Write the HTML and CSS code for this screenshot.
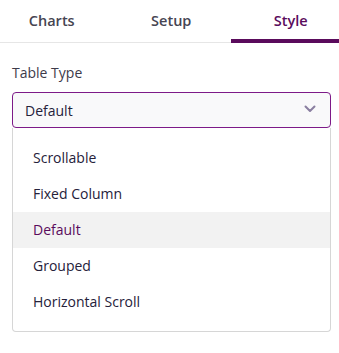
FILE: index.html
```html
<!DOCTYPE html>
<html>
<head>
<meta charset="utf-8">
<link rel="stylesheet" href="styles.css">
</head>
<body>
<div class="tabs">
  <div class="tab">Charts</div>
  <div class="tab">Setup</div>
  <div class="tab active">Style</div>
</div>
<div class="panel">
  <div class="label">Table Type</div>
  <div class="select">
    <span>Default</span>
    <svg class="chev" width="12" height="8" viewBox="0 0 12 8"><path d="M1.5 1.5 L6 6 L10.5 1.5" fill="none" stroke="#8a7fa0" stroke-width="2" stroke-linecap="round" stroke-linejoin="round"/></svg>
  </div>
  <ul class="menu">
    <li>Scrollable</li>
    <li>Fixed Column</li>
    <li class="selected">Default</li>
    <li>Grouped</li>
    <li>Horizontal Scroll</li>
  </ul>
</div>
</body>
</html>
```
FILE: styles.css
```css
html, body {
  margin: 0;
  padding: 0;
  background: #fff;
  overflow: hidden;
  font-family: "Open Sans", "Noto Sans", sans-serif;
}
.tabs {
  display: grid;
  grid-template-columns: repeat(3, 119.5px);
  margin-left: -8px;
  width: 358.5px;
  height: 43px;
  box-sizing: border-box;
  border-bottom: 1px solid #e6e6e6;
}
.tab {
  text-align: center;
  font-size: 14.5px;
  font-weight: 600;
  color: #464552;
  padding-top: 11px;
  line-height: 20px;
  box-sizing: border-box;
}
.tab.active {
  color: #5a0b5c;
  border-bottom: 4px solid #5a0b5c;
  border-top-left-radius: 4px;
  margin-bottom: -1px;
}
.panel {
  padding: 20px 8px 0 12px;
}
.label {
  font-size: 14px;
  color: #3d3b4a;
  line-height: 20px;
  height: 20px;
  margin-bottom: 9px;
}
.select {
  display: flex;
  align-items: center;
  justify-content: space-between;
  height: 36px;
  box-sizing: border-box;
  border: 1px solid #7d1a88;
  border-radius: 4px;
  background: #f9f9fa;
  padding: 0 14px 0 12px;
  font-size: 14px;
  color: #25213a;
}
.chev {
  margin-top: -2px;
}
.menu {
  list-style: none;
  margin: 0;
  padding: 12px 0 11px;
  border: 1px solid #d6d6d6;
  border-top: none;
  border-radius: 0 0 4px 4px;
  box-sizing: border-box;
}
.menu li {
  height: 36px;
  line-height: 36px;
  padding-left: 20px;
  font-size: 14px;
  color: #25213a;
}
.menu li.selected {
  background: #f2f2f2;
  color: #5a0b5c;
}
```
